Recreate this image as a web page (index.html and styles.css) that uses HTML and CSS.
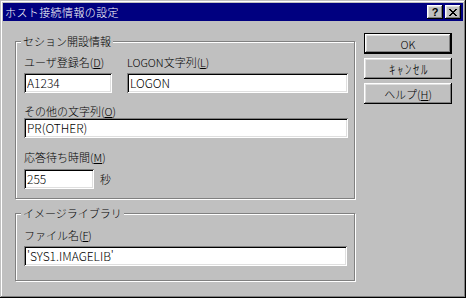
FILE: index.html
```html
<!DOCTYPE html>
<html lang="ja">
<head>
    <meta charset="UTF-8">
    <title>ホスト接続情報の設定</title>
    <link rel="stylesheet" href="styles.css">
</head>
<body>
    <div class="window">
        <div class="titlebar">
            <span class="title">ホスト接続情報の設定</span>
            <div class="caption-buttons">
                <span class="cap-btn cap-help">?</span>
                <span class="cap-btn cap-close">
                    <svg width="8" height="7" viewBox="0 0 8 7" shape-rendering="crispEdges">
                        <path d="M0 0h2v1h-2z M6 0h2v1h-2z M1 1h2v1h-2z M5 1h2v1h-2z M2 2h4v1h-4z M3 3h2v1h-2z M2 4h4v1h-4z M1 5h2v1h-2z M5 5h2v1h-2z M0 6h2v1h-2z M6 6h2v1h-2z" fill="#000"/>
                    </svg>
                </span>
            </div>
        </div>

        <div class="client">
            <div class="groups">
                <div class="group group-session">
                    <div class="group-title">セション開設情報</div>
                    <div class="row row-first">
                        <label class="field">
                            <span class="label">ユーザ登録名(<u>D</u>)</span>
                            <input class="edit edit-user" type="text" value="A1234">
                        </label>
                        <label class="field">
                            <span class="label">LOGON文字列(<u>L</u>)</span>
                            <input class="edit edit-logon" type="text" value="LOGON">
                        </label>
                    </div>
                    <label class="field field-other">
                        <span class="label">その他の文字列(<u>O</u>)</span>
                        <input class="edit edit-wide" type="text" value="PR(OTHER)">
                    </label>
                    <label class="field field-wait">
                        <span class="label">応答待ち時間(<u>M</u>)</span>
                        <span class="inline">
                            <input class="edit edit-wait" type="text" value="255">
                            <span class="unit">秒</span>
                        </span>
                    </label>
                </div>

                <div class="group group-image">
                    <div class="group-title">イメージライブラリ</div>
                    <label class="field field-file">
                        <span class="label">ファイル名(<u>F</u>)</span>
                        <input class="edit edit-file" type="text" value="'SYS1.IMAGELIB'">
                    </label>
                </div>
            </div>

            <div class="buttons">
                <button class="btn btn-default">OK</button>
                <button class="btn btn-cancel">ｷｬﾝｾﾙ</button>
                <button class="btn">ヘルプ(<u>H</u>)</button>
            </div>
        </div>
    </div>
</body>
</html>
```

FILE: styles.css
```css
* {
    box-sizing: border-box;
}
body {
    margin: 0;
    font-family: "Noto Sans CJK JP", sans-serif;
    font-size: 11px;
    font-weight: 300;
    color: #000;
}
u {
    text-decoration-thickness: 1px;
    text-underline-offset: 1px;
}
.window {
    width: 466px;
    height: 298px;
    padding: 3px;
    background: #c0c0c0;
    box-shadow: inset -1px -1px #000, inset 1px 1px #c0c0c0, inset -2px -2px #808080, inset 2px 2px #fff;
    display: flex;
    flex-direction: column;
}
.titlebar {
    height: 18px;
    background: #000080;
    color: #fff;
    display: flex;
    align-items: center;
    padding: 0 2px;
}
.title {
    flex: 1;
    line-height: 18px;
    letter-spacing: 0.4px;
}
.caption-buttons {
    display: flex;
    gap: 2px;
}
.cap-btn {
    width: 16px;
    height: 14px;
    background: #c0c0c0;
    box-shadow: inset -1px -1px #000, inset 1px 1px #fff, inset -2px -2px #808080, inset 2px 2px #dfdfdf;
    display: flex;
    align-items: center;
    justify-content: center;
    color: #000;
}
.cap-help {
    font-family: "Liberation Sans", sans-serif;
    font-weight: bold;
    font-size: 11px;
    line-height: 14px;
    padding-bottom: 1px;
}
.cap-close svg {
    display: block;
    margin-left: -1px;
}
.client {
    flex: 1;
    display: flex;
    padding-left: 12px;
}
.groups {
    margin-top: 20px;
    width: 340px;
}
.group {
    border: 1px solid #808080;
    box-shadow: 1px 1px 0 #fff, inset 1px 1px 0 #fff;
    padding: 0 8px;
    display: flex;
    flex-direction: column;
    align-items: flex-start;
}
.group-session {
    padding-bottom: 9px;
}
.group-image {
    margin-top: 14px;
    padding-bottom: 14px;
}
.group-title {
    margin: -7px 0 0 -3px;
    padding: 0 2px;
    background: #c0c0c0;
    line-height: 13px;
}
.row {
    display: flex;
    gap: 15px;
}
.row-first {
    margin-top: 8px;
}
.field {
    display: flex;
    flex-direction: column;
    align-items: flex-start;
}
.label {
    line-height: 13px;
    margin-bottom: 4px;
}
.field-other {
    margin-top: 12px;
}
.field-other .label {
    margin-bottom: 0;
}
.field-wait {
    margin-top: 13px;
}
.field-wait .label {
    margin-bottom: 5px;
}
.field-file {
    margin-top: 9px;
}
.inline {
    display: flex;
    align-items: center;
    gap: 6px;
}
.edit {
    height: 20px;
    border: none;
    outline: none;
    margin: 0;
    padding: 0 0 1px 3px;
    background: #fff;
    font: inherit;
    font-size: 12px;
    color: #000;
    box-shadow: inset 1px 1px #808080, inset -1px -1px #fff, inset 2px 2px #000, inset -2px -2px #dfdfdf;
}
.edit-user {
    width: 88px;
}
.edit-logon {
    width: 221px;
}
.edit-wide {
    width: 324px;
}
.edit-wait {
    width: 70px;
}
.edit-file {
    width: 323px;
}
.buttons {
    margin: 12px 0 0 9px;
    display: flex;
    flex-direction: column;
    gap: 4px;
}
.btn {
    width: 88px;
    height: 21px;
    margin: 0;
    padding: 0;
    border: none;
    background: #c0c0c0;
    font: inherit;
    color: #000;
    box-shadow: inset -1px -1px #000, inset 1px 1px #fff, inset -2px -2px #808080, inset 2px 2px #dfdfdf;
}
.btn-default {
    border: 1px solid #000;
}
.btn-cancel {
    font-size: 13px;
    letter-spacing: 1.5px;
    padding-left: 2px;
}
```
